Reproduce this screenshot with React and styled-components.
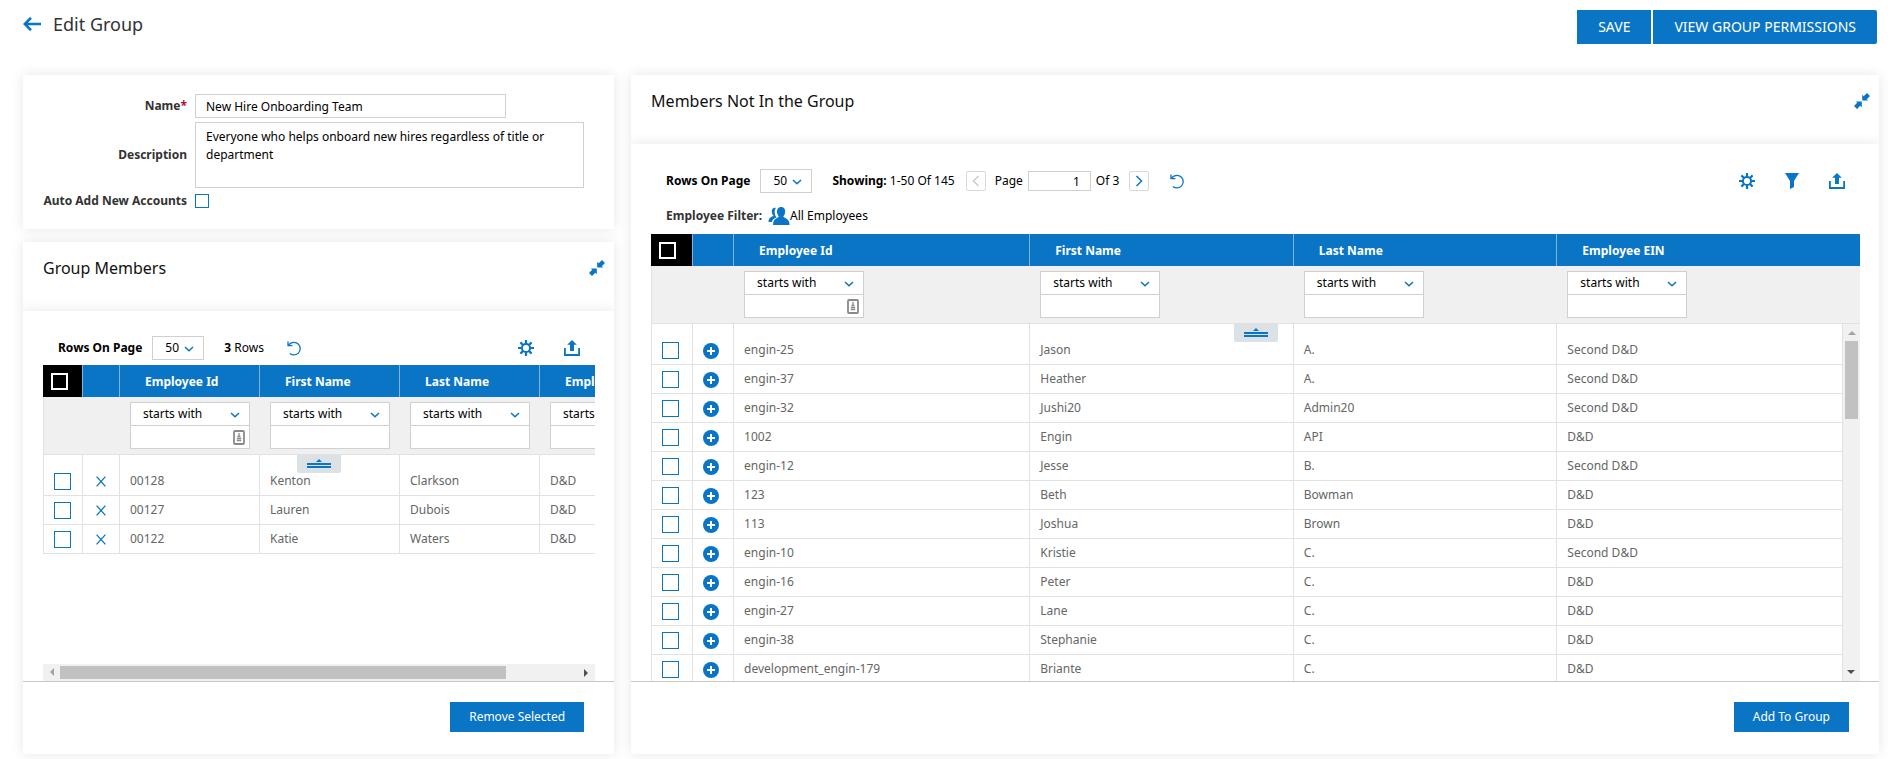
import React from 'react'
import styled, { createGlobalStyle } from 'styled-components'

const BLUE = '#0a75c5'

const GlobalStyle = createGlobalStyle`
    *{
        box-sizing: border-box;
    }
    body{
        margin: 0;
        background: #fff;
        color: #333;
        font-family: "Noto Sans", "Open Sans", sans-serif;
        font-size: 12px;
        line-height: 18px;
    }
    button, input, select, textarea{
        font: inherit;
        color: inherit;
        margin: 0;
    }
`

const BackIcon = () => (
    <svg width="18" height="14" viewBox="0 0 18 14" fill="none" stroke={BLUE} strokeWidth="2.6">
        <path d="M8 0.8 L1.8 7 L8 13.2 M2 7 H18" />
    </svg>
)

const CollapseIcon = () => (
    <svg width="16" height="16" viewBox="0 0 16 16" fill={BLUE}>
        <path d="M13 0 L16 3 L12.8 6.2 L14.2 7.6 H8.2 V1.8 L9.7 3.3 Z" />
        <path d="M3 16 L0 13 L3.2 9.8 L1.8 8.4 H7.8 V14.2 L6.3 12.7 Z" />
    </svg>
)

const ChevronIcon = () => (
    <svg width="10" height="6" viewBox="0 0 10 6" fill="none" stroke={BLUE} strokeWidth="1.5">
        <path d="M1 1 L5 4.8 L9 1" />
    </svg>
)

const RefreshIcon = () => (
    <svg width="14" height="15" viewBox="0 0 14 15" fill="none" stroke={BLUE} strokeWidth="1.3">
        <path d="M1 0.5 V4.6 H5.4" />
        <path d="M1.4 4.4 C2.8 2.4 4.8 1.4 7 1.4 C10.6 1.4 13.2 4.2 13.2 7.6 C13.2 11.2 10.4 13.9 7 13.9 C5.4 13.9 4 13.4 2.9 12.4" />
    </svg>
)

const GearIcon = () => (
    <svg width="16" height="16" viewBox="0 0 16 16" fill="none" stroke={BLUE}>
        <circle cx="8" cy="8" r="4.1" strokeWidth="2" />
        <path d="M8 0 V4 M8 12 V16 M0 8 H4 M12 8 H16 M2.4 2.4 L5.2 5.2 M10.8 10.8 L13.6 13.6 M13.6 2.4 L10.8 5.2 M5.2 10.8 L2.4 13.6" strokeWidth="2.2" />
    </svg>
)

const FilterIcon = () => (
    <svg width="14" height="16" viewBox="0 0 14 16" fill={BLUE}>
        <path d="M0 0 H14 L9 8 V14 L5 16 V8 Z" />
    </svg>
)

const ExportIcon = () => (
    <svg width="16" height="16" viewBox="0 0 16 16" fill={BLUE}>
        <path d="M8 0 L12.8 4.8 H10 V11 H6 V4.8 H3.2 Z" />
        <path d="M0 8 H1.8 V14 H14.2 V8 H16 V16 H0 Z" />
    </svg>
)

const PeopleIcon = () => (
    <svg width="22" height="18" viewBox="0 0 21 18" fill={BLUE}>
        <path d="M7.4 1 C5 0.4 3.2 1.9 3.3 4.4 C3.4 6.2 3.8 7.6 5 8.4 C4.6 9.8 0 9.6 0 15 H3.4 C3.8 12.4 5.4 11.2 8 10.4 C6 8 5.4 3.6 7.4 1 Z" />
        <path d="M12.6 0 C15.2 0 16.8 1.8 16.7 4.6 C16.6 7 15.8 8.6 14.8 9.4 C15.2 11.2 21 10.6 21 17.4 V18 H4.6 V17.4 C4.6 10.6 10 11.2 10.4 9.4 C9.4 8.6 8.6 7 8.5 4.6 C8.4 1.8 10 0 12.6 0 Z" />
    </svg>
)

const AddIcon = () => (
    <svg width="16" height="16" viewBox="0 0 16 16">
        <circle cx="8" cy="8" r="8" fill={BLUE} />
        <path d="M8 4 V12 M4 8 H12" stroke="#fff" strokeWidth="2" />
    </svg>
)

const RemoveIcon = () => (
    <svg width="16" height="11" viewBox="0 0 16 11" fill="none" stroke={BLUE} strokeWidth="1.3">
        <path d="M3.6 0.6 L12.4 10.4 M12.4 0.6 L3.6 10.4" />
    </svg>
)

const CardIcon = () => (
    <svg width="12" height="15" viewBox="0 0 12 15" fill="none" stroke="#8a8a8a">
        <rect x="1" y="1" width="10" height="13" rx="1" strokeWidth="1.8" />
        <path d="M6 3 V7 M4.5 6.5 H7.5 M3.8 8.5 H8.2 M3.8 10.5 H8.2" strokeWidth="1.3" />
    </svg>
)

const HandleIcon = () => (
    <svg width="24" height="9" viewBox="0 0 24 9" fill={BLUE}>
        <path d="M12 0 L15 3 H9 Z" />
        <rect y="4" width="24" height="2" />
        <rect y="7" width="24" height="2" />
    </svg>
)

const groupMembers = [
    ['00128', 'Kenton', 'Clarkson', 'D&D'],
    ['00127', 'Lauren', 'Dubois', 'D&D'],
    ['00122', 'Katie', 'Waters', 'D&D'],
]

const otherMembers = [
    ['engin-25', 'Jason', 'A.', 'Second D&D'],
    ['engin-37', 'Heather', 'A.', 'Second D&D'],
    ['engin-32', 'Jushi20', 'Admin20', 'Second D&D'],
    ['1002', 'Engin', 'API', 'D&D'],
    ['engin-12', 'Jesse', 'B.', 'Second D&D'],
    ['123', 'Beth', 'Bowman', 'D&D'],
    ['113', 'Joshua', 'Brown', 'D&D'],
    ['engin-10', 'Kristie', 'C.', 'Second D&D'],
    ['engin-16', 'Peter', 'C.', 'D&D'],
    ['engin-27', 'Lane', 'C.', 'D&D'],
    ['engin-38', 'Stephanie', 'C.', 'D&D'],
    ['development_engin-179', 'Briante', 'C.', 'D&D'],
]

const columns = ['Employee Id', 'First Name', 'Last Name', 'Employee EIN']

function MemberTable({ label, rows, widths, minWidth, action, ActionIcon }) {
    return (
        <Table aria-label={label} $minWidth={minWidth}>
            <colgroup>
                { widths.map((width, index) => (
                    <Col key={index} $width={width} />
                )) }
            </colgroup>
            <thead>
                <tr>
                    <HeadCell $black><Tick type="checkbox" $light aria-label="Select all" /></HeadCell>
                    <HeadCell />
                    { columns.map((column) => (
                        <HeadCell key={column}>{column}</HeadCell>
                    )) }
                </tr>
                <tr>
                    <FilterCell />
                    <FilterCell />
                    { columns.map((column, index) => (
                        <FilterCell key={column}>
                            <Filter>
                                <SelectWrap>
                                    <Select aria-label={`${column} condition`}><option>starts with</option></Select>
                                    <ChevronIcon />
                                </SelectWrap>
                                <FilterInputWrap>
                                    <FilterInput type="text" aria-label={`${column} filter`} />
                                    { index === 0 && <CardIcon /> }
                                </FilterInputWrap>
                            </Filter>
                        </FilterCell>
                    )) }
                </tr>
            </thead>
            <tbody>
                { rows.map((row) => (
                    <tr key={row[0]}>
                        <Cell><Tick type="checkbox" aria-label={`Select ${row[0]}`} /></Cell>
                        <Cell>
                            <IconButton aria-label={`${action} ${row[0]}`}><ActionIcon /></IconButton>
                        </Cell>
                        { row.map((value, index) => (
                            <Cell key={index}>{value}</Cell>
                        )) }
                    </tr>
                )) }
            </tbody>
        </Table>
    )
}

function RowsOnPage({ id }) {
    return (
        <>
            <ToolLabel htmlFor={id}>Rows On Page</ToolLabel>
            <SelectWrap $small>
                <Select id={id}><option>50</option></Select>
                <ChevronIcon />
            </SelectWrap>
        </>
    )
}

function App() {
    return (
        <Page>
            <GlobalStyle />
            <TopBar>
                <BackLink href="#back" aria-label="Back"><BackIcon /></BackLink>
                <PageTitle>Edit Group</PageTitle>
                <TopButton>SAVE</TopButton>
                <TopButton $last>VIEW GROUP PERMISSIONS</TopButton>
            </TopBar>
            <Columns>
                <LeftColumn>
                    <DetailsCard>
                        <FormLabel htmlFor="name">Name<Required>*</Required></FormLabel>
                        <NameInput id="name" type="text" defaultValue="New Hire Onboarding Team" />
                        <FormLabel htmlFor="description">Description</FormLabel>
                        <Description id="description" defaultValue="Everyone who helps onboard new hires regardless of title or department" />
                        <FormLabel htmlFor="autoAdd">Auto Add New Accounts</FormLabel>
                        <Tick id="autoAdd" type="checkbox" $small />
                    </DetailsCard>
                    <Panel>
                        <PanelHeader>
                            <PanelTitle>Group Members</PanelTitle>
                            <IconButton aria-label="Collapse"><CollapseIcon /></IconButton>
                        </PanelHeader>
                        <PanelBody>
                            <Toolbar>
                                <RowsOnPage id="groupRows" />
                                <RowCount><b>3</b> Rows</RowCount>
                                <RefreshButton aria-label="Refresh"><RefreshIcon /></RefreshButton>
                                <ToolActions>
                                    <IconButton aria-label="Settings"><GearIcon /></IconButton>
                                    <IconButton aria-label="Export"><ExportIcon /></IconButton>
                                </ToolActions>
                            </Toolbar>
                            <Grid>
                                <MemberTable
                                    label="Group Members"
                                    rows={groupMembers}
                                    widths={['40px', '37px', '140px', '140px', '140px', '140px']}
                                    minWidth="637px"
                                    action="Remove"
                                    ActionIcon={RemoveIcon}
                                />
                                <Handle aria-label="Hide filters"><HandleIcon /></Handle>
                            </Grid>
                            <HScroll aria-hidden="true">
                                <Arrow $dir="left" />
                                <HTrack><HThumb /></HTrack>
                                <Arrow $dir="right" $active />
                            </HScroll>
                        </PanelBody>
                        <PanelFooter>
                            <FooterButton>Remove Selected</FooterButton>
                        </PanelFooter>
                    </Panel>
                </LeftColumn>
                <Panel>
                    <PanelHeader>
                        <PanelTitle>Members Not In the Group</PanelTitle>
                        <IconButton aria-label="Collapse"><CollapseIcon /></IconButton>
                    </PanelHeader>
                    <PanelBody>
                        <Toolbar>
                            <RowsOnPage id="otherRows" />
                            <RowCount><b>Showing:</b> 1-50 Of 145</RowCount>
                            <PageButton aria-label="Previous page" disabled>
                                <svg width="8" height="12" viewBox="0 0 8 12" fill="none" stroke="#ccc" strokeWidth="1.5"><path d="M6.5 1 L1.5 6 L6.5 11" /></svg>
                            </PageButton>
                            <label htmlFor="page">Page</label>
                            <PageInput id="page" type="text" defaultValue="1" />
                            <span>Of 3</span>
                            <PageButton aria-label="Next page">
                                <svg width="8" height="12" viewBox="0 0 8 12" fill="none" stroke={BLUE} strokeWidth="1.5"><path d="M1.5 1 L6.5 6 L1.5 11" /></svg>
                            </PageButton>
                            <RefreshButton aria-label="Refresh"><RefreshIcon /></RefreshButton>
                            <ToolActions>
                                <IconButton aria-label="Settings"><GearIcon /></IconButton>
                                <IconButton aria-label="Filter"><FilterIcon /></IconButton>
                                <IconButton aria-label="Export"><ExportIcon /></IconButton>
                            </ToolActions>
                        </Toolbar>
                        <EmployeeFilter>
                            <b>Employee Filter:</b>
                            <FilterLink href="#employees"><PeopleIcon />All Employees</FilterLink>
                        </EmployeeFilter>
                        <Grid>
                            <MemberTable
                                label="Members Not In the Group"
                                rows={otherMembers}
                                widths={['42px', '41px', '24.5%', '21.8%', '21.8%', 'auto']}
                                action="Add"
                                ActionIcon={AddIcon}
                            />
                            <Handle aria-label="Hide filters"><HandleIcon /></Handle>
                            <VScroll aria-hidden="true">
                                <Arrow $dir="up" />
                                <VTrack><VThumb /></VTrack>
                                <Arrow $dir="down" $active />
                            </VScroll>
                        </Grid>
                    </PanelBody>
                    <PanelFooter>
                        <FooterButton>Add To Group</FooterButton>
                    </PanelFooter>
                </Panel>
            </Columns>
        </Page>
    )
}

export default App

const Page = styled.main`
    display: flex;
    flex-direction: column;
    height: 100vh;
    min-height: 600px;
    padding: 10px 12px 5px 23px;
`

const TopBar = styled.header`
    display: flex;
    align-items: flex-start;
    gap: 2px;
    height: 65px;
    padding-right: 2px;
`

const BackLink = styled.a`
    display: flex;
    padding: 7px 0;
`

const PageTitle = styled.h1`
    flex: 1;
    margin: 0;
    padding-left: 10px;
    font-size: 18px;
    font-weight: 400;
    line-height: 28px;
`

const TopButton = styled.button`
    height: 34px;
    padding: 0 21px;
    border: 0;
    border-radius: ${props => props.$last? '0 2px 2px 0':'0'};
    background: ${BLUE};
    color: #fff;
    font-size: 14px;
    cursor: pointer;
`

const Columns = styled.div`
    flex: 1;
    min-height: 0;
    display: grid;
    grid-template-columns: minmax(0, 9fr) minmax(0, 19fr);
    grid-template-rows: minmax(0, 1fr);
    gap: 17px;
`

const LeftColumn = styled.div`
    display: flex;
    flex-direction: column;
    gap: 13px;
    min-height: 0;
`

const DetailsCard = styled.form`
    display: grid;
    grid-template-columns: 144px 1fr;
    align-items: center;
    gap: 4px 8px;
    padding: 19px 30px 19px 20px;
    background: #fff;
    box-shadow: 0 0 12px rgba(0, 0, 0, 0.1);
`

const FormLabel = styled.label`
    font-weight: 700;
    text-align: right;
    white-space: nowrap;
`

const Required = styled.span`
    color: #b0122b;
`

const NameInput = styled.input`
    width: 80%;
    height: 24px;
    padding: 0 10px;
    border: 1px solid #d0d0d0;
    color: #000;
`

const Description = styled.textarea`
    display: block;
    width: 100%;
    height: 66px;
    padding: 5px 10px;
    border: 1px solid #d0d0d0;
    color: #000;
    resize: none;
`

const Tick = styled.input`
    appearance: none;
    display: block;
    width: ${props => props.$small? '14px':'17px'};
    height: ${props => props.$small? '14px':'17px'};
    border: ${props => props.$light? '2px solid #fff':`1px solid ${BLUE}`};
`

const Panel = styled.section`
    flex: 1;
    min-height: 0;
    display: flex;
    flex-direction: column;
    overflow: hidden;
    background: #fff;
    box-shadow: 0 0 12px rgba(0, 0, 0, 0.1);
`

const PanelHeader = styled.div`
    display: flex;
    justify-content: space-between;
    align-items: flex-start;
    height: 69px;
    padding: 18px 9px 0 20px;
`

const PanelTitle = styled.h2`
    margin: 0;
    color: #111;
    font-size: 16px;
    font-weight: 400;
    line-height: 16px;
`

const PanelBody = styled.div`
    flex: 1;
    min-height: 0;
    display: flex;
    flex-direction: column;
    padding: 25px 19px 0 20px;
    box-shadow: 0 0 12px rgba(0, 0, 0, 0.1);
`

const PanelFooter = styled.div`
    display: flex;
    justify-content: flex-end;
    padding: 20px 30px 22px;
    border-top: 1px solid #c8c8c8;
    background: #fff;
`

const FooterButton = styled.button`
    height: 30px;
    padding: 0 19px;
    border: 0;
    background: ${BLUE};
    color: #fff;
    cursor: pointer;
`

const IconButton = styled.button`
    display: inline-flex;
    padding: 0;
    border: 0;
    background: none;
    vertical-align: middle;
    cursor: pointer;
`

const Toolbar = styled.div`
    display: flex;
    align-items: center;
    padding: 0 15px 5px;
    color: #000;
`

const ToolLabel = styled.label`
    margin-right: 10px;
    color: #000;
    font-weight: 700;
`

const RowCount = styled.span`
    margin: 0 11px 0 20px;
    b{
        font-weight: 700;
    }
`

const RefreshButton = styled(IconButton)`
    margin-left: 12px;
`

const ToolActions = styled.div`
    display: flex;
    gap: 30px;
    margin-left: auto;
`

const SelectWrap = styled.div`
    position: relative;
    width: ${props => props.$small? '52px':'120px'};
    svg{
        position: absolute;
        top: 10px;
        right: 10px;
        pointer-events: none;
    }
`

const Select = styled.select`
    appearance: none;
    display: block;
    width: 100%;
    height: 24px;
    padding: 0 12px;
    border: 1px solid #d0d0d0;
    border-radius: 0;
    background: #fff;
    color: #000;
`

const PageButton = styled.button`
    display: flex;
    align-items: center;
    justify-content: center;
    width: 20px;
    height: 20px;
    margin-right: 9px;
    padding: 0;
    border: 1px solid #d8d8d8;
    border-radius: 2px;
    background: #fff;
`

const PageInput = styled.input`
    width: 63px;
    height: 20px;
    margin: 0 5px;
    padding: 0 10px;
    border: 1px solid #d0d0d0;
    text-align: right;
    & + span{
        margin-right: 10px;
    }
`

const EmployeeFilter = styled.div`
    display: flex;
    align-items: center;
    gap: 6px;
    height: 36px;
    padding: 0 15px;
    b{
        font-weight: 700;
    }
`

const FilterLink = styled.a`
    display: flex;
    align-items: center;
    color: #000;
    text-decoration: none;
`

const Grid = styled.div`
    position: relative;
    flex: 1;
    min-height: 0;
    overflow: hidden;
`

const Table = styled.table`
    width: 100%;
    min-width: ${props => props.$minWidth || '0'};
    table-layout: fixed;
    border-collapse: separate;
    border-spacing: 0;
`

const Col = styled.col`
    width: ${props => props.$width};
`

const HeadCell = styled.th`
    height: 32px;
    padding: ${props => props.$black? '0 8px':'1px 25px 0'};
    border-right: 1px solid #7fb5e0;
    background: ${props => props.$black? '#000':BLUE};
    color: #fff;
    font-weight: 700;
    text-align: left;
    &:last-child{
        border-right: 0;
    }
`

const FilterCell = styled.td`
    height: 58px;
    padding: 0 10px;
    border-bottom: 1px solid #e2e2e2;
    background: #f0f0f0;
    &:first-child{
        border-left: 1px solid #e2e2e2;
    }
`

const Filter = styled.div`
    width: 120px;
`

const FilterInputWrap = styled.div`
    position: relative;
    svg{
        position: absolute;
        top: 4px;
        right: 5px;
    }
`

const FilterInput = styled.input`
    display: block;
    width: 100%;
    height: 23px;
    padding: 0 10px;
    border: 1px solid #d0d0d0;
    border-top: 0;
`

const Cell = styled.td`
    height: 29px;
    padding: 0 10px;
    border-right: 1px solid #e2e2e2;
    border-bottom: 1px solid #e2e2e2;
    color: #666;
    white-space: nowrap;
    &:first-child{
        border-left: 1px solid #e2e2e2;
    }
    tr:first-child > &{
        height: 41px;
        padding-top: 12px;
    }
`

const Handle = styled.button`
    position: absolute;
    top: 90px;
    left: 50%;
    display: flex;
    justify-content: center;
    width: 44px;
    height: 18px;
    margin-left: -22px;
    padding: 4px 0;
    border: 0;
    border-radius: 0 0 2px 2px;
    background: #dce1e5;
`

const HScroll = styled.div`
    display: flex;
    height: 17px;
    background: #f1f1f1;
`

const HTrack = styled.div`
    flex: 1;
    padding: 2px 0;
`

const HThumb = styled.div`
    width: 86%;
    height: 13px;
    background: #c1c1c1;
`

const VScroll = styled.div`
    position: absolute;
    top: 90px;
    right: 0;
    bottom: 0;
    display: flex;
    flex-direction: column;
    width: 18px;
    border-left: 1px solid #e2e2e2;
    background: #f1f1f1;
`

const VTrack = styled.div`
    flex: 1;
    padding: 0 2px;
`

const VThumb = styled.div`
    height: 24%;
    background: #c1c1c1;
`

const rotations = { up: 0, right: 90, down: 180, left: 270 }

const Arrow = styled.span`
    display: flex;
    align-items: center;
    justify-content: center;
    width: 17px;
    height: 17px;
    transform: rotate(${props => rotations[props.$dir]}deg);
    &::before{
        content: '';
        border: 4px solid transparent;
        border-top: 0;
        border-bottom-color: ${props => props.$active? '#505050':'#a3a3a3'};
    }
`
